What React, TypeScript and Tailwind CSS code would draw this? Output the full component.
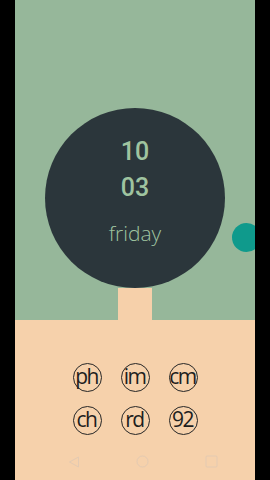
import React from "react";

const apps = ["ph", "im", "cm", "ch", "rd", "92"];

export default function App() {
  return (
    <div className="w-[270px] h-[480px] bg-black flex overflow-hidden">
      <div className="relative ml-[15px] w-[240px] h-[480px] flex flex-col overflow-hidden">
        <div className="h-[320px] bg-[#96b79a] flex flex-col items-center pt-[108px]">
          <div className="w-[180px] h-[180px] shrink-0 rounded-full bg-[#2b363b] flex flex-col items-center text-[#9fc4a0]">
            <div
              className="mt-[26px] text-[25px] leading-[36px] font-medium"
              style={{ fontFamily: "Roboto, 'Noto Sans', sans-serif" }}
            >
              10
            </div>
            <div
              className="text-[25px] leading-[36px] font-medium"
              style={{ fontFamily: "Roboto, 'Noto Sans', sans-serif" }}
            >
              03
            </div>
            <div
              className="mt-[13px] text-[21px] leading-[28px] font-light"
              style={{ fontFamily: "'Open Sans', 'DejaVu Sans', sans-serif" }}
            >
              friday
            </div>
          </div>
          <div className="w-[34px] flex-1 bg-[#f6d0aa]" />
        </div>
        <div className="flex-1 bg-[#f6d1ab] flex flex-col items-center">
          <div className="mt-[43px] grid grid-cols-3 gap-x-[19px] gap-y-[14px]">
            {apps.map((a) => (
              <div
                key={a}
                className="w-[29px] h-[29px] rounded-full border border-[#262626] flex items-center justify-center text-[#1e1e1e] text-[21px] leading-none tracking-[-1.5px]"
                style={{ fontFamily: "'Open Sans', 'DejaVu Sans', sans-serif", fontWeight: 400 }}
              >
                <span className="-mt-[3px] -ml-[1px]">{a}</span>
              </div>
            ))}
          </div>
          <div className="mt-[20px] w-full flex items-center justify-between pl-[53px] pr-[37px]">
            <svg width="12" height="12" viewBox="0 0 12 12">
              <path d="M10.5 1 L1.5 6 L10.5 11 Z" fill="none" stroke="#e3cab2" strokeWidth="1" />
            </svg>
            <svg width="13" height="13" viewBox="0 0 13 13">
              <circle cx="6.5" cy="6.5" r="5.5" fill="none" stroke="#e3cab2" strokeWidth="1" />
            </svg>
            <svg width="13" height="13" viewBox="0 0 13 13">
              <rect x="1" y="1" width="11" height="11" rx="1" fill="none" stroke="#e3cab2" strokeWidth="1" />
            </svg>
          </div>
        </div>
        <div className="absolute left-[217px] top-[223px] w-[29px] h-[29px] rounded-full bg-[#0f9a8c]" />
      </div>
    </div>
  );
}
